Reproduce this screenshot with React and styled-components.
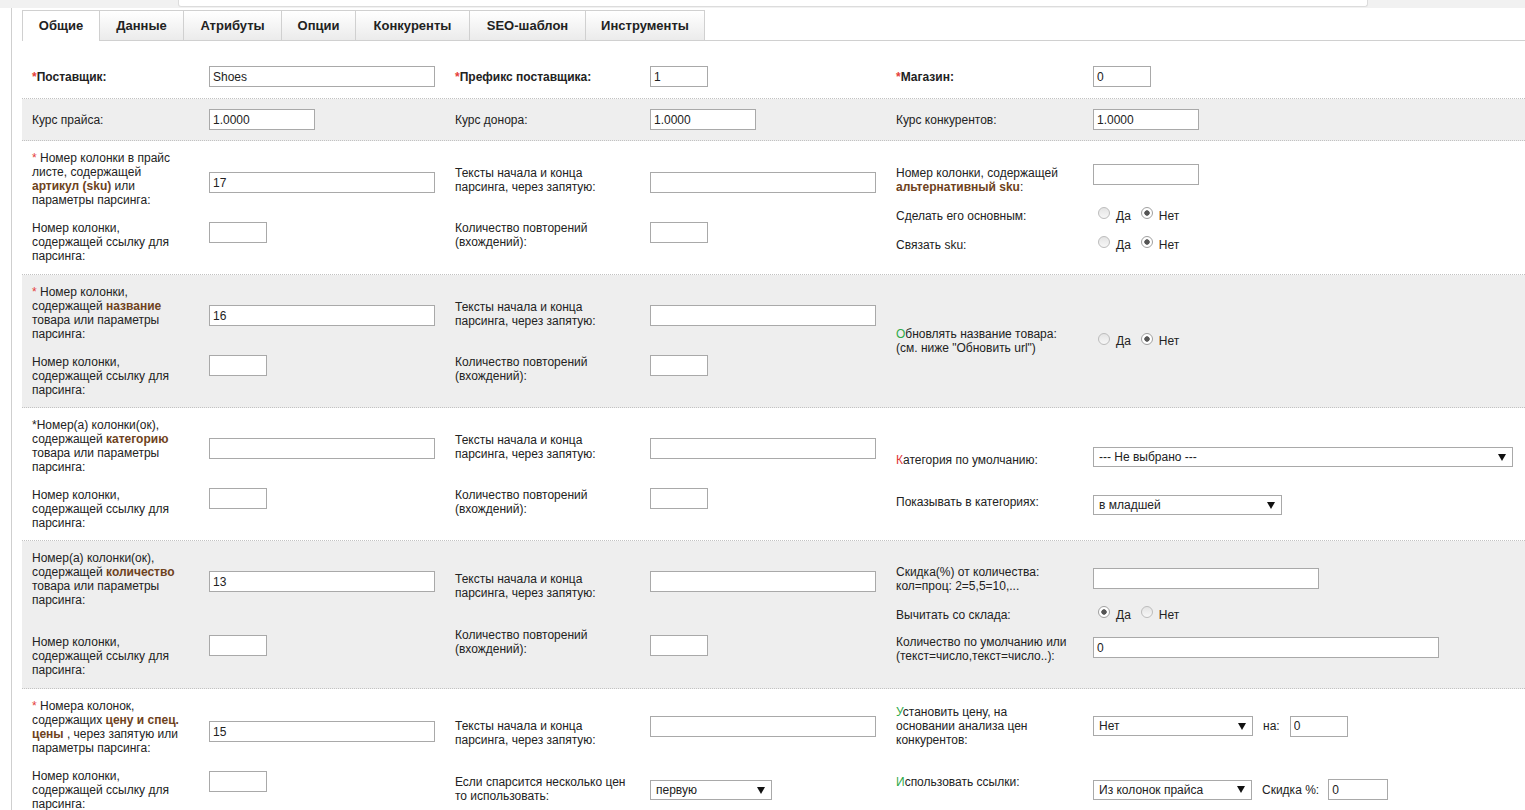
import React from 'react';
import styled, { createGlobalStyle } from 'styled-components';

const GlobalStyle = createGlobalStyle`
  html, body {
    margin: 0;
    padding: 0;
    background: #fff;
  }
  body {
    font-family: 'Liberation Sans', Arial, sans-serif;
    font-size: 12px;
    color: #222;
  }
  * {
    box-sizing: border-box;
  }
`;

const TopStrip = styled.div`
  height: 8px;
  background: #f1f1f1;
  display: flex;
  overflow: hidden;
`;

const AddressBar = styled.div`
  margin-left: 178px;
  width: 1190px;
  height: 7px;
  background: #fff;
  border: 1px solid #dcdcdc;
  border-top: none;
  border-radius: 0 0 3px 3px;
`;

const Page = styled.div`
  padding-left: 11px;
`;

const Frame = styled.div`
  border-left: 1px solid #cfcfcf;
  padding: 2px 0 0 10px;
  min-height: 802px;
`;

const TabBar = styled.div`
  display: flex;
  align-items: flex-start;
  height: 31px;
  border-bottom: 1px solid #d0d0d0;
`;

const Tab = styled.div`
  flex: none;
  width: ${p => p.$w}px;
  height: ${p => (p.$active ? 31 : 30)}px;
  display: flex;
  align-items: center;
  justify-content: center;
  font-size: 13px;
  font-weight: bold;
  color: #222;
  border: 1px solid #d0d0d0;
  border-left: none;
  border-bottom: none;
  background: ${p => (p.$active ? '#fff' : 'linear-gradient(#ffffff, #ebebeb)')};
  padding-bottom: ${p => (p.$active ? 1 : 0)}px;

  &:first-child {
    border-left: 1px solid #d0d0d0;
  }
`;

const Section = styled.div`
  background: ${p => (p.$grey ? '#eeeeee' : '#fff')};
  border-bottom: 1px dotted #c2c2c2;
  padding: ${p => p.$pad};
`;

const FlatRow = styled(Section)`
  display: grid;
  grid-template-columns: 177px 246px 195px 246px 197px 1fr;
  align-items: center;
`;

const SplitRow = styled(Section)`
  display: flex;
  align-items: flex-start;
`;

const Label = styled.div`
  line-height: 14px;
  white-space: nowrap;
  font-weight: ${p => (p.$bold ? 'bold' : 'normal')};
`;

const LeftBlock = styled.div`
  flex: none;
  width: 864px;
  display: grid;
  grid-template-columns: 177px 246px 195px 246px;
  row-gap: ${p => p.$gap}px;
  align-items: start;

  ${Label} {
    margin-top: 1px;
    margin-bottom: -1px;
  }
`;

const RightBlock = styled.div`
  flex: 1;
  margin-top: ${p => p.$dy || 0}px;
  display: flex;
  flex-direction: column;
`;

const RRow = styled.div`
  display: grid;
  grid-template-columns: 197px 1fr;
  align-items: ${p => p.$align || 'center'};
  margin-top: ${p => p.$dy || 0}px;
`;

const Cell = styled.div`
  padding-left: 10px;
  margin-top: ${p => p.$dy || 0}px;
`;

const Req = styled.span`
  color: #e5403a;
`;

const Key = styled.b`
  color: #6e4220;
`;

const Mark = styled.span`
  color: ${p => p.$c};
`;

const TextInput = styled.input`
  display: block;
  width: ${p => p.$w}px;
  height: 21px;
  margin: 0;
  border: 1px solid #a9a9a9;
  padding: 0 3px;
  font: 12px 'Liberation Sans', Arial, sans-serif;
  color: #222;
  background: #fff;
  outline: none;
`;

const Select = styled.div`
  flex: none;
  width: ${p => p.$w}px;
  height: 20px;
  border: 1px solid #a9a9a9;
  background: #fff;
  display: flex;
  align-items: center;
  justify-content: space-between;
  padding: 0 6px 0 5px;
  font-size: 12px;
  color: #222;
`;

const Caret = styled.span`
  width: 0;
  height: 0;
  border-left: 4px solid transparent;
  border-right: 4px solid transparent;
  border-top: 7px solid #111;
`;

const Inline = styled.div`
  display: flex;
  align-items: center;
  padding-left: 10px;
  margin-top: ${p => p.$dy || 0}px;
`;

const InlineText = styled.span`
  margin: 0 ${p => p.$after}px 0 10px;
  line-height: 14px;
`;

const RadioGroup = styled.div`
  display: flex;
  align-items: center;
  padding-left: 15px;
`;

const Radio = styled.span`
  flex: none;
  width: 12px;
  height: 12px;
  margin-bottom: 5px;
  border-radius: 50%;
  border: 1px solid ${p => (p.$on ? '#a0a0a0' : '#bcbcbc')};
  background: ${p =>
    p.$on
      ? 'radial-gradient(circle, #555 0, #555 2.4px, #fff 3px)'
      : 'linear-gradient(#e4e4e4, #f7f7f7)'};
`;

const RadioText = styled.span`
  margin: 0 10px 0 6px;
  line-height: 14px;
`;

const Radios = ({ yes }) => (
  <RadioGroup>
    <Radio $on={yes} />
    <RadioText>Да</RadioText>
    <Radio $on={!yes} />
    <RadioText>Нет</RadioText>
  </RadioGroup>
);

const Dropdown = ({ w, children }) => (
  <Select $w={w}>
    <span>{children}</span>
    <Caret />
  </Select>
);

const ParsingBlock = ({ gap = 14, label, value, r1 = [0, 21, 15, 21], r2 = [0, 1, 0, 1], extra }) => (
  <LeftBlock $gap={gap}>
    <Cell $dy={r1[0]}><Label>{label}</Label></Cell>
    <Cell $dy={r1[1]}><TextInput $w={226} defaultValue={value} /></Cell>
    <Cell $dy={r1[2]}><Label>Тексты начала и конца<br />парсинга, через запятую:</Label></Cell>
    <Cell $dy={r1[3]}><TextInput $w={226} defaultValue="" /></Cell>
    <Cell $dy={r2[0]}><Label>Номер колонки,<br />содержащей ссылку для<br />парсинга:</Label></Cell>
    <Cell $dy={r2[1]}><TextInput $w={58} defaultValue="" /></Cell>
    {extra || (
      <>
        <Cell $dy={r2[2]}><Label>Количество повторений<br />(вхождений):</Label></Cell>
        <Cell $dy={r2[3]}><TextInput $w={58} defaultValue="" /></Cell>
      </>
    )}
  </LeftBlock>
);

const tabs = [
  ['Общие', 78],
  ['Данные', 84],
  ['Атрибуты', 98],
  ['Опции', 74],
  ['Конкуренты', 114],
  ['SEO-шаблон', 116],
  ['Инструменты', 119],
];

export default function App() {
  return (
    <>
      <GlobalStyle />
      <TopStrip>
        <AddressBar />
      </TopStrip>
      <Page>
        <Frame>
          <TabBar>
            {tabs.map(([t, w], i) => (
              <Tab key={t} $w={w} $active={i === 0}>{t}</Tab>
            ))}
          </TabBar>

          <FlatRow $pad="25px 0 11px">
            <Cell><Label $bold><Req>*</Req>Поставщик:</Label></Cell>
            <Cell><TextInput $w={226} defaultValue="Shoes" /></Cell>
            <Cell><Label $bold><Req>*</Req>Префикс поставщика:</Label></Cell>
            <Cell><TextInput $w={58} defaultValue="1" /></Cell>
            <Cell><Label $bold><Req>*</Req>Магазин:</Label></Cell>
            <Cell><TextInput $w={58} defaultValue="0" /></Cell>
          </FlatRow>

          <FlatRow $grey $pad="10px 0 10px">
            <Cell><Label>Курс прайса:</Label></Cell>
            <Cell><TextInput $w={106} defaultValue="1.0000" /></Cell>
            <Cell><Label>Курс донора:</Label></Cell>
            <Cell><TextInput $w={106} defaultValue="1.0000" /></Cell>
            <Cell><Label>Курс конкурентов:</Label></Cell>
            <Cell><TextInput $w={106} defaultValue="1.0000" /></Cell>
          </FlatRow>

          <SplitRow $pad="9px 0 12px">
            <ParsingBlock
              r1={[0, 22, 15, 22]}
              r2={[0, 2, 0, 2]}
              value="17"
              label={<><Req>*</Req> Номер колонки в прайс<br />листе, содержащей<br /><Key>артикул (sku)</Key> или<br />параметры парсинга:</>}
            />
            <RightBlock $dy={14}>
              <RRow $align="start">
                <Cell $dy={2}><Label>Номер колонки, содержащей<br /><Key>альтернативный sku</Key>:</Label></Cell>
                <Cell><TextInput $w={106} defaultValue="" /></Cell>
              </RRow>
              <RRow $dy={13}>
                <Cell><Label>Сделать его основным:</Label></Cell>
                <Radios yes={false} />
              </RRow>
              <RRow $dy={12}>
                <Cell><Label>Связать sku:</Label></Cell>
                <Radios yes={false} />
              </RRow>
            </RightBlock>
          </SplitRow>

          <SplitRow $grey $pad="9px 0 11px">
            <ParsingBlock
              value="16"
              label={<><Req>*</Req> Номер колонки,<br />содержащей <Key>название</Key><br />товара или параметры<br />парсинга:</>}
            />
            <RightBlock $dy={43}>
              <RRow>
                <Cell><Label><Mark $c="#2eaa4a">О</Mark>бновлять название товара:<br />(см. ниже "Обновить url")</Label></Cell>
                <Radios yes={false} />
              </RRow>
            </RightBlock>
          </SplitRow>

          <SplitRow $pad="9px 0 11px">
            <ParsingBlock
              value=""
              label={<>*Номер(а) колонки(ок),<br />содержащей <Key>категорию</Key><br />товара или параметры<br />парсинга:</>}
            />
            <RightBlock $dy={30}>
              <RRow $align="end">
                <Cell><Label><Mark $c="#e0383a">К</Mark>атегория по умолчанию:</Label></Cell>
                <Inline><Dropdown w={420}>--- Не выбрано ---</Dropdown></Inline>
              </RRow>
              <RRow $align="start" $dy={28}>
                <Cell><Label>Показывать в категориях:</Label></Cell>
                <Inline><Dropdown w={189}>в младшей</Dropdown></Inline>
              </RRow>
            </RightBlock>
          </SplitRow>

          <SplitRow $grey $pad="9px 0 12px">
            <ParsingBlock
              gap={21}
              r1={[0, 21, 21, 21]}
              r2={[7, 8, 0, 8]}
              value="13"
              label={<>Номер(а) колонки(ок),<br />содержащей <Key>количество</Key><br />товара или параметры<br />парсинга:</>}
            />
            <RightBlock $dy={15}>
              <RRow $align="start">
                <Cell><Label>Скидка(%) от количества:<br />кол=проц: 2=5,5=10,...</Label></Cell>
                <Cell $dy={3}><TextInput $w={226} defaultValue="" /></Cell>
              </RRow>
              <RRow $dy={13}>
                <Cell><Label>Вычитать со склада:</Label></Cell>
                <Radios yes />
              </RRow>
              <RRow $align="start" $dy={12}>
                <Cell><Label>Количество по умолчанию или<br />(текст=число,текст=число..):</Label></Cell>
                <Cell $dy={2}><TextInput $w={346} defaultValue="0" /></Cell>
              </RRow>
            </RightBlock>
          </SplitRow>

          <SplitRow $pad="9px 0 11px">
            <ParsingBlock
              r1={[0, 23, 20, 18]}
              r2={[0, 3]}
              value="15"
              label={<><Req>*</Req> Номера колонок,<br />содержащих <Key>цену и спец.</Key><br /><Key>цены</Key> , через запятую или<br />параметры парсинга:</>}
              extra={
                <>
                  <Cell $dy={6}><Label>Если спарсится несколько цен<br />то использовать:</Label></Cell>
                  <Cell $dy={12}><Dropdown w={122}>первую</Dropdown></Cell>
                </>
              }
            />
            <RightBlock $dy={7}>
              <RRow>
                <Cell><Label><Mark $c="#2eaa4a">У</Mark>становить цену, на<br />основании анализа цен<br />конкурентов:</Label></Cell>
                <Inline>
                  <Dropdown w={160}>Нет</Dropdown>
                  <InlineText $after={10}>на:</InlineText>
                  <TextInput $w={58} defaultValue="0" />
                </Inline>
              </RRow>
              <RRow $align="start" $dy={28}>
                <Cell><Label><Mark $c="#2eaa4a">И</Mark>спользовать ссылки:</Label></Cell>
                <Inline $dy={4}>
                  <Dropdown w={159}>Из колонок прайса</Dropdown>
                  <InlineText $after={9}>Скидка %:</InlineText>
                  <TextInput $w={60} defaultValue="0" />
                </Inline>
              </RRow>
            </RightBlock>
          </SplitRow>
        </Frame>
      </Page>
    </>
  );
}
